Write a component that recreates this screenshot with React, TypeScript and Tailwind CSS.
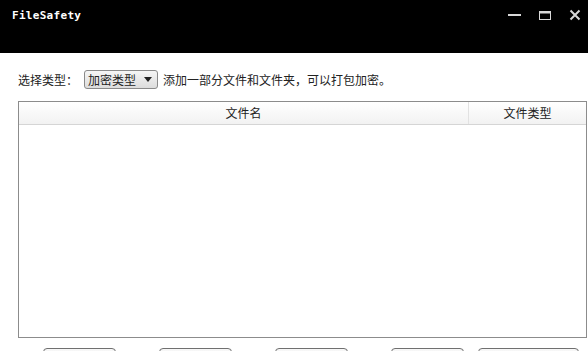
import React from "react";

const cjk = { fontFamily: '"Noto Sans CJK SC", "Noto Sans", sans-serif' };

function WindowButtons() {
  return (
    <div className="self-start flex items-center gap-[17px] pr-[7px] pt-[9px]">
      <svg width="14" height="12" viewBox="0 0 14 12">
        <rect x="0" y="5" width="13" height="2" fill="#d8d8d8" />
      </svg>
      <svg width="13" height="12" viewBox="0 0 13 12">
        <rect x="0.5" y="2.5" width="11" height="8" fill="none" stroke="#d8d8d8" />
        <rect x="0" y="2" width="12" height="2.5" fill="#d8d8d8" />
      </svg>
      <svg width="12" height="12" viewBox="0 0 12 12">
        <path d="M1.5 1.5 L10.5 10.5 M10.5 1.5 L1.5 10.5" stroke="#d8d8d8" strokeWidth="2" />
      </svg>
    </div>
  );
}

export default function App() {
  const buttons = [
    { ml: "ml-[43px]", w: "w-[73px]" },
    { ml: "ml-[43px]", w: "w-[73px]" },
    { ml: "ml-[43px]", w: "w-[73px]" },
    { ml: "ml-[43px]", w: "w-[73px]" },
    { ml: "ml-[14px]", w: "w-[101px]" },
  ];

  return (
    <div className="w-[588px] h-[351px] overflow-hidden bg-white flex flex-col" style={cjk}>
      {/* title bar */}
      <header className="h-[53px] bg-black flex items-start justify-between shrink-0">
        <div
          className="pl-[12px] pt-[8px] text-[11px] font-bold text-white tracking-[0.3px]"
          style={{ fontFamily: '"DejaVu Sans Mono", "Liberation Mono", monospace' }}
        >
          FileSafety
        </div>
        <WindowButtons />
      </header>

      {/* type selector row */}
      <div className="flex items-center h-[22px] mt-[17px] pl-[18px] text-[12px] text-[#222]">
        <span>选择类型：</span>
        <div className="ml-[6px] h-[19px] w-[74px] flex items-center justify-between pl-[3px] pr-[5px] rounded-[3px] border border-[#8a8a8a] bg-gradient-to-b from-[#f6f6f6] to-[#dcdcdc]">
          <span>加密类型</span>
          <svg width="8" height="5" viewBox="0 0 8 5">
            <path d="M0 0 L8 0 L4 5 Z" fill="#222" />
          </svg>
        </div>
        <span className="ml-[5px]">添加一部分文件和文件夹，可以打包加密。</span>
      </div>

      {/* file list */}
      <div className="ml-[18px] mt-[12px] w-[569px] h-[237px] border border-[#8c8c8c] flex flex-col shrink-0">
        <div className="h-[23px] flex text-[12px] text-[#222] bg-gradient-to-b from-white to-[#f2f2f2] border-b border-[#d5d5d5]">
          <div className="w-[450px] flex items-center justify-center border-r border-[#e2e2e2]">文件名</div>
          <div className="flex-1 flex items-center justify-center">文件类型</div>
        </div>
        <div className="flex-1 bg-white" />
      </div>

      {/* bottom buttons, cut off by the window edge */}
      <div className="flex mt-[10px]">
        {buttons.map((b, i) => (
          <div
            key={i}
            className={`${b.ml} ${b.w} h-[26px] shrink-0 rounded-[4px] border border-[#707070] bg-gradient-to-b from-[#f8f8f8] to-[#e4e4e4]`}
          />
        ))}
      </div>
    </div>
  );
}
